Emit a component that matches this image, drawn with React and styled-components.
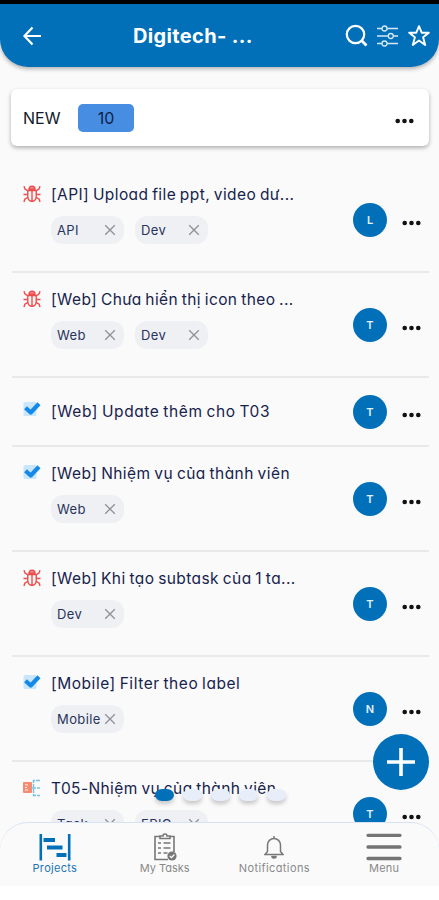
import React from 'react';
import styled, { createGlobalStyle } from 'styled-components';

const primary = '#0270b9';
const ink = '#17234d';

const GlobalStyle = createGlobalStyle`
    * {
        box-sizing: border-box;
    }

    body {
        margin: 0;
        background: #fff;
        font-family: Inter, "Noto Sans", sans-serif;
        font-feature-settings: "cv11";
    }
`;

const Screen = styled.div`
    position: relative;
    display: flex;
    flex-direction: column;
    width: 439px;
    height: 886px;
    overflow: hidden;
    background: #fafafa;
    border-top: 4px solid #000;
`;

const Header = styled.header`
    display: grid;
    grid-template-columns: 113px 1fr 112px;
    align-items: center;
    flex: none;
    height: 63px;
    padding: 0 8px 0 20px;
    border-radius: 0 0 28px 28px;
    background: ${primary};
    color: #fff;
    box-shadow: 0 2px 4px rgba(0,0,0,0.3);
`;

const HeaderTitle = styled.h1`
    margin: 0;
    font-size: 20px;
    font-weight: 700;
    line-height: 26px;
    letter-spacing: 0.35px;
    white-space: pre;
`;

const HeaderActions = styled.div`
    display: flex;
    justify-content: flex-end;
    align-items: center;
    gap: 7px;
`;

const ColumnCard = styled.section`
    display: flex;
    align-items: center;
    flex: none;
    height: 57px;
    margin: 22px 10px 0 11px;
    padding: 0 15px 0 12px;
    border-radius: 6px;
    background: #fff;
    box-shadow: 0 2px 4px rgba(0,0,0,0.3);
`;

const ColumnName = styled.span`
    width: 55px;
    font-size: 16px;
    color: #101a2c;
`;

const Count = styled.span`
    width: 56px;
    height: 28px;
    margin-right: auto;
    border-radius: 5px;
    background: #478ee3;
    color: #0d2146;
    font-size: 16px;
    line-height: 28px;
    text-align: center;
`;

const List = styled.main`
    flex: none;
    margin: 22px 10px 0 12px;
`;

const Row = styled.article`
    display: flex;
    height: ${props => (props.$short ? 68.5 : 105.2)}px;
    padding: ${props => (props.$short ? 21 : 14)}px 0 0 11px;
    border-bottom: 2px solid #e8e9ea;
`;

const TypeIcon = styled.div`
    width: 28px;
    padding-top: ${props => (props.$short ? 2 : 3)}px;
`;

const Body = styled.div`
    flex: 1;
    min-width: 0;
`;

const Title = styled.div`
    height: 26px;
    font-size: 15.5px;
    line-height: 26px;
    color: ${ink};
    white-space: nowrap;
    word-spacing: -1px;
    letter-spacing: ${props => props.$spacing || 0}px;
`;

const Chips = styled.div`
    display: flex;
    gap: 11px;
    margin-top: 8px;
`;

const ChipBox = styled.span`
    display: flex;
    align-items: center;
    justify-content: space-between;
    width: 73px;
    height: 28px;
    padding: 0 8px 0 6px;
    border-radius: 12px;
    background: #eff0f3;
    color: #28345d;
    font-size: 13px;
    letter-spacing: 0.4px;
`;

const Side = styled.div`
    display: flex;
    align-items: flex-start;
    gap: 15px;
    width: 76px;
    padding-top: ${props => (props.$short ? 0 : 25)}px;
    margin-top: -4px;
`;

const Avatar = styled.span`
    width: 34px;
    height: 34px;
    border-radius: 50%;
    background: ${primary};
    color: #e5f1fa;
    font-size: 11px;
    font-weight: 600;
    line-height: 34px;
    text-align: center;
`;

const DotsIcon = styled.svg`
    display: block;
    width: 19px;
    height: 6px;
    margin-top: ${props => props.$top || 0}px;
    fill: #111;
`;

const Pager = styled.div`
    position: absolute;
    left: 155px;
    bottom: 85px;
    display: flex;
    gap: 9px;
`;

const PagerDot = styled.span`
    width: 19px;
    height: 12px;
    border-radius: 7px / 6px;
    background: ${props => (props.$active ? primary : '#e7eef9')};
    box-shadow: 0 3px 4px rgba(0,0,0,0.2);
`;

const AddButton = styled.button`
    position: absolute;
    right: 10px;
    bottom: 96px;
    width: 56px;
    height: 56px;
    padding: 0;
    border: 0;
    border-radius: 50%;
    background: ${primary};

    svg {
        display: block;
        margin: auto;
    }
`;

const Nav = styled.nav`
    position: absolute;
    left: 0;
    right: 0;
    bottom: 0;
    display: grid;
    grid-template-columns: repeat(4, 1fr);
    height: 64px;
    border-top: 1.5px solid #d6e3f5;
    border-radius: 28px 28px 0 0;
    background: #fafafa;
`;

const NavItem = styled.div`
    display: flex;
    flex-direction: column;
    align-items: center;
    color: ${props => (props.$active ? '#1b75b5' : '#898989')};
    font-size: 11px;
    line-height: 14px;
    letter-spacing: ${props => props.$spacing || 0}px;
`;

const NavIcon = styled.div`
    display: flex;
    align-items: center;
    height: 30px;
    margin: 9px 0 -1px;
`;

const Dots = ({ top }) => (
    <DotsIcon $top={top} viewBox="0 0 19 6">
        <circle cx="2.7" cy="3" r="2.3" />
        <circle cx="9.5" cy="3" r="2.3" />
        <circle cx="16.3" cy="3" r="2.3" />
    </DotsIcon>
);

const Bug = () => (
    <svg width="18" height="18" viewBox="0 0 18 18" fill="none" stroke="#ee4d4d" strokeWidth="1.4">
        <path d="M6 4.2a3 3 0 0 1 6 0z" fill="#ee4d4d" fillOpacity="0.6" />
        <path d="M4.8 5.6h8.4v6a4.2 4.8 0 0 1-8.4 0zM9 6v10" />
        <path d="M1 1.2l.8 2.6 3.2 2M17 1.2l-.8 2.6-3.2 2M.5 9.5h4.3M17.5 9.5h-4.3M1 17l.8-2.8 3.2-1.8M17 17l-.8-2.8-3.2-1.8" />
    </svg>
);

const Check = () => (
    <svg width="18" height="18" viewBox="0 0 18 18" fill="none">
        <rect x="0.5" y="1" width="13" height="14" rx="1.5" fill="#c9e6fc" />
        <path d="M2.5 6.8l5.2 4.7 8.3-8.7" stroke="#1589e8" strokeWidth="4.2" strokeLinejoin="round" />
    </svg>
);

const Subtask = () => (
    <svg width="18" height="18" viewBox="0 0 18 18" fill="none">
        <rect x="0" y="3" width="9" height="11" rx="1" fill="#f58b70" />
        <path d="M2 5.8h3M2 8.5h2M2 11h3" stroke="#fff3ee" strokeWidth="1" />
        <path d="M9 9h8M17 1.5h-6.5v15H17" stroke="#75c4e6" strokeWidth="1.5" strokeDasharray="4 1" />
    </svg>
);

const icons = { bug: Bug, check: Check, subtask: Subtask };

const Chip = ({ label }) => (
    <ChipBox>
        {label}
        <svg width="12" height="12" viewBox="0 0 12 12" stroke="#8d9097" strokeWidth="1.3">
            <path d="M1.2 1.2l9.6 9.6M10.8 1.2l-9.6 9.6" />
        </svg>
    </ChipBox>
);

const tasks = [
    { type: 'bug', title: '[API] Upload file ppt, video dư...', tags: ['API', 'Dev'], user: 'L', spacing: 0.41 },
    { type: 'bug', title: '[Web] Chưa hiển thị icon theo ...', tags: ['Web', 'Dev'], user: 'T', spacing: 0.4 },
    { type: 'check', title: '[Web] Update thêm cho T03', tags: [], user: 'T', spacing: 0.58 },
    { type: 'check', title: '[Web] Nhiệm vụ của thành viên', tags: ['Web'], user: 'T', spacing: 0.44 },
    { type: 'bug', title: '[Web] Khi tạo subtask của 1 ta...', tags: ['Dev'], user: 'T', spacing: 0.42 },
    { type: 'check', title: '[Mobile] Filter theo label', tags: ['Mobile'], user: 'N', spacing: 0.54 },
    { type: 'subtask', title: 'T05-Nhiệm vụ của thành viên', tags: ['Task', 'EPIC'], user: 'T', spacing: 0.4 },
];

const Task = ({ task }) => {
    const Icon = icons[task.type];
    const short = task.tags.length === 0;

    return (
        <Row $short={short}>
            <TypeIcon $short={short}><Icon /></TypeIcon>
            <Body>
                <Title $spacing={task.spacing}>{task.title}</Title>
                {!short && <Chips>{task.tags.map(tag => <Chip key={tag} label={tag} />)}</Chips>}
            </Body>
            <Side $short={short}>
                <Avatar>{task.user}</Avatar>
                <Dots top={17} />
            </Side>
        </Row>
    );
};

const App = () => (
    <>
        <GlobalStyle />
        <Screen>
            <Header>
                <svg width="24" height="24" viewBox="0 0 24 24" fill="none" stroke="#fff" strokeWidth="2.2">
                    <path d="M12.5 3.5L4.5 12l8 8.5M4.5 12h16.5" />
                </svg>
                <HeaderTitle>Digitech- ...</HeaderTitle>
                <HeaderActions>
                    <svg width="24" height="24" viewBox="0 0 24 24" fill="none" stroke="#fff" strokeWidth="2.2">
                        <circle cx="10.5" cy="10.5" r="8.7" />
                        <path d="M16.500 16.500l5 5" strokeWidth="2.8" />
                    </svg>
                    <svg width="24" height="24" viewBox="0 0 24 24" fill="none" stroke="#d5e8f6" strokeWidth="1.3">
                        <path d="M1 4.5h5M11 4.5h11M1 12h11M17.5 12h4.5M1 19.5h5M11 19.5h11" />
                        <circle cx="8.5" cy="4.5" r="2.5" />
                        <circle cx="14.8" cy="12" r="2.5" />
                        <circle cx="8.5" cy="19.5" r="2.5" />
                    </svg>
                    <svg width="24" height="24" viewBox="0 0 24 24" fill="none" stroke="#fff" strokeWidth="1.9" strokeLinejoin="round">
                        <path d="M12 2.2l2.7 6.5h7.1l-5.7 4.6 2.1 7.7-6.2-4.4L5.8 21l2.1-7.7-5.7-4.6h7.1z" />
                    </svg>
                </HeaderActions>
            </Header>
            <ColumnCard>
                <ColumnName>NEW</ColumnName>
                <Count>10</Count>
                <Dots top={6} />
            </ColumnCard>
            <List>
                {tasks.map(task => <Task key={task.title} task={task} />)}
            </List>
            <Pager>
                {[0, 1, 2, 3, 4].map(page => <PagerDot key={page} $active={page === 0} />)}
            </Pager>
            <AddButton aria-label="Add">
                <svg width="28" height="28" viewBox="0 0 28 28" stroke="#fff" strokeWidth="3.6">
                    <path d="M14 0v28M0 14h28" />
                </svg>
            </AddButton>
            <Nav>
                <NavItem $active $spacing={0.3}>
                    <NavIcon>
                        <svg width="32" height="28" viewBox="0 0 32 28" fill={primary}>
                            <path d="M0.5 1h2.6v26.5H.5zM28.9 1h2.6v26.5h-2.6zM4.5 5h11.5v4H4.5zM8 12.5h15.5v4H8zM17.5 20h10v4h-10z" />
                        </svg>
                    </NavIcon>
                    Projects
                </NavItem>
                <NavItem>
                    <NavIcon>
                        <svg width="24" height="28" viewBox="0 0 24 28" fill="none" stroke="#777" strokeWidth="1.6">
                            <path d="M7 3.5H2v23h13M17 3.5h4V19" />
                            <path d="M7 5.5V3h3a2 2 0 0 1 4 0h3v2.5z" />
                            <path d="M5 10h3M5 15h3M5 20h3M10.5 10h7M10.5 15h7M10.5 20h4" strokeWidth="1.5" />
                            <circle cx="19" cy="23" r="4.6" fill="#777" stroke="none" />
                            <path d="M16.8 23l1.7 1.7 2.9-3.2" stroke="#fff" strokeWidth="1.2" />
                        </svg>
                    </NavIcon>
                    My Tasks
                </NavItem>
                <NavItem $spacing={0.4}>
                    <NavIcon>
                        <svg width="20" height="24" viewBox="0 0 20 24" fill="none" stroke="#777" strokeWidth="1.5">
                            <path d="M1 19.5h18l-2.5-3V10a6.5 6.5 0 0 0-13 0v6.5zM10 3.5V1" />
                            <path d="M8 21.5a2 1.5 0 0 0 4 0z" fill="#777" />
                        </svg>
                    </NavIcon>
                    Notifications
                </NavItem>
                <NavItem $spacing={0.2}>
                    <NavIcon>
                        <svg width="36" height="28" viewBox="0 0 36 28" stroke="#747474" strokeWidth="3.3" strokeLinecap="round">
                            <path d="M2 2.3h32M2 14h32M2 25.5h32" />
                        </svg>
                    </NavIcon>
                    Menu
                </NavItem>
            </Nav>
        </Screen>
    </>
);

export default App;
